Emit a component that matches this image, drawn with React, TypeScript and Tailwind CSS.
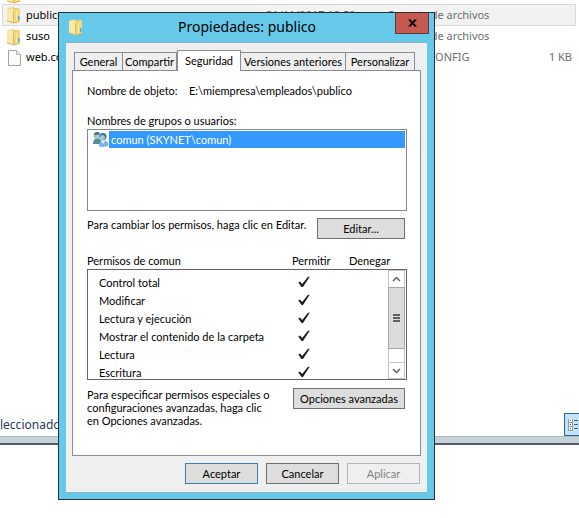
import type { ReactNode } from 'react';

const uiFont = 'font-[Lato,"Liberation_Sans",Arial,sans-serif]';
const shellFont = "font-['Noto_Sans','Open_Sans',sans-serif]";

function FolderIcon() {
  return (
    <svg width="14" height="18" viewBox="0 0 14 18" className="shrink-0" aria-hidden="true">
      <path d="M1 2 L7 1 L7 2 L12 2 L12 15 L1 15 Z" fill="#e6cd70" />
      <path d="M0 3 L5 2 L7 4 L7 17 L0 15 Z" fill="#f8e9a8" />
      <path d="M6 5 L12 2 L13 3 L13 15 L7 17 L6 16 Z" fill="#f1d97e" />
      <path d="M6.500 5 V16" stroke="#d9bb58" strokeWidth="1" />
      <path d="M9.500 5 V15" stroke="#f7e7a2" strokeWidth="1" />
      <path d="M0 15 L7 17 L13 15" fill="none" stroke="#d2b65c" strokeWidth="1" />
      <path d="M11 10 H12.500 V14 H11 Z" fill="#5ba6dc" />
    </svg>
  );
}

function FileIcon() {
  return (
    <svg width="14" height="18" viewBox="0 0 14 18" className="shrink-0" aria-hidden="true">
      <path d="M1.500 1.500 H9.500 L13.500 5.500 V16.500 H1.500 Z" fill="#fbfbfb" stroke="#a3a3a3" />
      <path d="M9.500 1.500 V5.500 H13.500" fill="#ececec" stroke="#b4b4b4" />
    </svg>
  );
}

function UsersIcon() {
  return (
    <svg width="17" height="17" viewBox="0 0 17 17" className="shrink-0" aria-hidden="true">
      <path d="M1 13 C1 9 3 7.500 5.500 7.500 C8 7.500 9.500 9 9.500 13 Z" fill="#4b8d9c" />
      <circle cx="5" cy="4.500" r="3.500" fill="#9cc94f" />
      <circle cx="5.500" cy="5" r="2.700" fill="#a5cbd6" />
      <path d="M2 4 C2 0.500 7 0 8 3 L5 4 Z" fill="#3c7896" />
      <path d="M7 15.500 C7 11 8.500 9.500 11 9.500 C14 9.500 16.500 11 16.500 14 C16 16 10 16.500 7 15.500 Z" fill="#7fb0e6" />
      <circle cx="11" cy="5.500" r="3.500" fill="#35708f" />
      <circle cx="10.500" cy="6.500" r="2.500" fill="#9fc9d8" />
      <path d="M9.500 10 L11 13 L13 10 Z" fill="#e4f1fb" />
    </svg>
  );
}

function CheckMark() {
  return (
    <svg width="12" height="12" viewBox="0 0 12 12" role="img" aria-label="Permitido">
      <path d="M0.300 6.500 L2 5.500 L4.200 8 L10 0.800 L11.700 0.800 L5 11 L3.600 11 Z" fill="#1c1c1c" />
    </svg>
  );
}

type FileRow = { icon: ReactNode; name: string; date: string; kind: string; size: string; selected?: boolean };

const files: FileRow[] = [
  { icon: <FolderIcon />, name: 'publico', date: '21/11/2017 12:50', kind: 'Carpeta de archivos', size: '', selected: true },
  { icon: <FolderIcon />, name: 'suso', date: '', kind: 'Carpeta de archivos', size: '' },
  { icon: <FileIcon />, name: 'web.config', date: '', kind: 'Archivo CONFIG', size: '1 KB' },
];

function Explorer() {
  return (
    <div className={`flex h-[445px] flex-col text-[11px] ${shellFont}`}>
      <div className="flex h-1 items-end overflow-hidden pl-[7px]">
        <FolderIcon />
      </div>
      <ul className="flex-1 pr-[3px] pl-[2px]">
        {files.map((file) => (
          <li
            key={file.name}
            className={`flex items-center border pl-1 text-[#6d6d6d] ${
              file.selected ? 'h-[22px] border-[#d9d9d9] bg-[#f2f2f2]' : 'h-[21px] border-transparent'
            }`}
          >
            {file.icon}
            <span className="ml-[5px] w-60 text-black">{file.name}</span>
            <span className="w-[121px] whitespace-nowrap">{file.date}</span>
            <span className="flex-1 whitespace-nowrap">{file.kind}</span>
            <span className="pr-[3px]">{file.size}</span>
          </li>
        ))}
      </ul>
      <div className="flex items-center justify-between">
        <span className="text-xs text-[#1e395b]">leccionado</span>
        <button
          type="button"
          aria-label="Detalles"
          className="h-[23px] w-[15px] overflow-hidden border border-r-0 border-[#2a6594] bg-[#c5e3f8] pl-[3px]"
        >
          <svg width="12" height="14" viewBox="0 0 12 14" shapeRendering="crispEdges" aria-hidden="true">
            <path d="M0 1h5v12h-5z" fill="#8e9aa6" />
            <path d="M1 1h3v3h-3z M1 5h3v3h-3z M1 9h3v3h-3z" fill="#fff" />
            <path d="M2 2h1v1h-1z M2 10h1v1h-1z" fill="#3a5a7c" />
            <path d="M2 6h1v1h-1z" fill="#d21c1c" />
            <path d="M6 2h4v1h-4z M6 6h4v1h-4z M6 10h4v1h-4z" fill="#4c5f80" />
          </svg>
        </button>
      </div>
      <div className="h-[9px] border-t border-b-2 border-t-[#adbcc2] border-b-[#5a5a66] bg-[#c3d3d9]" />
    </div>
  );
}

function Tab({ label, width, active = false }: { label: string; width: string; active?: boolean }) {
  return (
    <button
      type="button"
      role="tab"
      aria-selected={active}
      className={`border-t border-r border-[#8b8b97] text-center whitespace-nowrap ${width} ${
        active ? '-mb-px h-[21px] border-l bg-white pb-[2px]' : 'h-[18px] bg-[#efefef] first:border-l'
      }`}
    >
      {label}
    </button>
  );
}

function Button({ children, className = '', disabled = false }: { children: ReactNode; className?: string; disabled?: boolean }) {
  return (
    <button
      type="button"
      disabled={disabled}
      className={`h-[21px] shrink-0 border text-center whitespace-nowrap ${
        disabled ? 'border-[#b5b5b5] bg-[#efefef] text-[#838383]' : 'bg-[#dddddd]'
      } ${className}`}
    >
      {children}
    </button>
  );
}

const permissions = [
  'Control total',
  'Modificar',
  'Lectura y ejecución',
  'Mostrar el contenido de la carpeta',
  'Lectura',
  'Escritura',
];

function ScrollBar() {
  return (
    <div className="flex w-[17px] shrink-0 flex-col border-x border-[#c4c4c4] bg-white">
      <button type="button" aria-label="Subir" className="flex h-[17px] items-center justify-center border-t border-[#c4c4c4]">
        <svg width="9" height="6" viewBox="0 0 9 6" aria-hidden="true">
          <path d="M1 5 L4.500 1.500 L8 5" fill="none" stroke="#606060" strokeWidth="1.500" />
        </svg>
      </button>
      <div className="-mx-px flex h-[62px] flex-col items-center justify-center gap-px border border-[#a6a6a6] bg-[#dcdcdc]">
        <span className="h-[2px] w-[7px] bg-[#606060]" />
        <span className="h-[2px] w-[7px] bg-[#606060]" />
        <span className="h-[2px] w-[7px] bg-[#606060]" />
      </div>
      <button type="button" aria-label="Bajar" className="mt-auto flex h-[17px] items-center justify-center border-y border-[#c4c4c4]">
        <svg width="9" height="6" viewBox="0 0 9 6" aria-hidden="true">
          <path d="M1 1 L4.500 4.500 L8 1" fill="none" stroke="#606060" strokeWidth="1.500" />
        </svg>
      </button>
    </div>
  );
}

function PropertiesDialog() {
  return (
    <section
      role="dialog"
      aria-labelledby="dialog-title"
      className={`absolute top-3 left-[58px] w-[377px] border border-[#26303a] bg-[#66c9ea] px-[7px] pb-[6px] text-[11px] leading-[13px] text-black ${uiFont}`}
    >
      <header className="flex h-[29px] items-start">
        <span className="mt-[5px] ml-[3px]">
          <FolderIcon />
        </span>
        <h1 id="dialog-title" className={`flex-1 pt-1 pl-4 text-center text-sm leading-5 ${shellFont}`}>
          Propiedades: publico
        </h1>
        <button
          type="button"
          aria-label="Cerrar"
          className="-mr-[2px] flex h-[21px] w-[34px] items-center justify-center border border-t-0 border-[#5e3a3c] bg-[#c75a50]"
        >
          <svg width="9" height="8" viewBox="0 0 10 8" aria-hidden="true">
            <path d="M0 0 H3 L5 2.500 L7 0 H10 L6.500 4 L10 8 H7 L5 5.500 L3 8 H0 L3.500 4 Z" fill="#000" />
          </svg>
        </button>
      </header>

      <div className="border-y border-[#8fb2c4] bg-[#efefef] px-[6px] pt-[7px] pb-2">
        <div role="tablist" className="relative flex items-end pl-[2px]">
          <Tab label="General" width="w-[49px]" />
          <Tab label="Compartir" width="w-[54px]" />
          <Tab label="Seguridad" width="w-[64px]" active />
          <Tab label="Versiones anteriores" width="w-[105px]" />
          <Tab label="Personalizar" width="w-[69px]" />
        </div>

        <div role="tabpanel" className="border border-[#8b8b97] bg-white pt-[13px] pr-[13px] pb-[28px] pl-[14px]">
          <p className="flex">
            <span className="w-[102px]">Nombre de objeto:</span>
            <span>E:\miempresa\empleados\publico</span>
          </p>

          <h2 className="mt-[17px]">Nombres de grupos o usuarios:</h2>
          <ul className="mt-[2px] h-[82px] border border-[#828790] py-px pr-px pl-1">
            <li className="flex h-[17px] items-center">
              <UsersIcon />
              <span className="flex-1 bg-[#3399ff] py-[2px] pl-[2px] text-white">comun (SKYNET\comun)</span>
            </li>
          </ul>

          <div className="mt-[7px] flex items-start justify-between pr-[2px]">
            <p className="whitespace-nowrap">Para cambiar los permisos, haga clic en Editar.</p>
            <Button className="w-[88px] border-[#707070]">Editar...</Button>
          </div>

          <div className="mt-[15px] flex">
            <span className="w-[190px]">Permisos de comun</span>
            <span className="w-[72px] pl-[15px]">Permitir</span>
            <span>Denegar</span>
          </div>
          <div className="mt-[2px] flex h-[111px] border border-[#646464] pr-px">
            <table className="mt-px h-min flex-1 table-fixed">
              <tbody>
                {permissions.map((name) => (
                  <tr key={name} className="h-[18px]">
                    <td className="w-[210px] pt-1 pl-[11px] whitespace-nowrap">{name}</td>
                    <td className="pt-1">
                      <CheckMark />
                    </td>
                  </tr>
                ))}
              </tbody>
            </table>
            <ScrollBar />
          </div>

          <div className="mt-2 flex items-start justify-between pr-[2px]">
            <p className="w-[186px]">
              Para especificar permisos especiales o configuraciones avanzadas, haga clic en Opciones avanzadas.
            </p>
            <Button className="w-[112px] border-[#707070]">Opciones avanzadas</Button>
          </div>
        </div>

        <footer className="mt-[7px] flex justify-end gap-2 pr-px">
          <Button className="w-[73px] border-[#3c7fb1]">Aceptar</Button>
          <Button className="w-[73px] border-[#707070]">Cancelar</Button>
          <Button className="w-[73px]" disabled>
            Aplicar
          </Button>
        </footer>
      </div>
    </section>
  );
}

export default function App() {
  return (
    <main className="relative min-h-screen overflow-hidden bg-white">
      <Explorer />
      <PropertiesDialog />
    </main>
  );
}
